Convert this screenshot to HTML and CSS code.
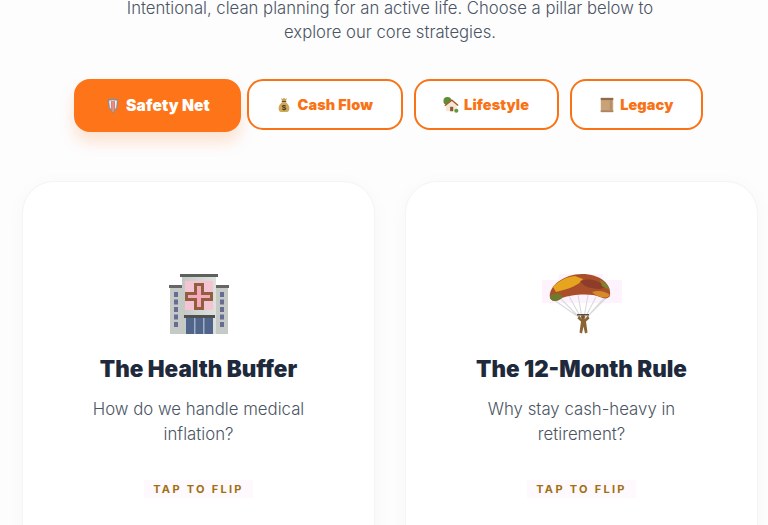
FILE: index.html
```html
<!DOCTYPE html>
<html lang="en">
<head>
<meta charset="utf-8">
<title>Retirement pillars</title>
<link rel="stylesheet" href="styles.css">
</head>
<body>
<main class="page">
  <div class="intro">
    <p class="intro-line">Intentional, clean planning for an active life. Choose a pillar below to</p>
    <p class="intro-line">explore our core strategies.</p>
  </div>
  <nav class="tabs">
    <button class="tab tab-active">
      <svg class="tab-icon" viewBox="0 0 18 18"><path d="M3 1.500 9 .5l6 1-1 9.500L9 17.500 4 11z" fill="#8a8f94"/><path d="M4.500 3 9 2.200 13.500 3l-1 7.600L9 15.500l-3.500-4.900z" fill="#eee"/><path d="M7 3h4v10l-2 2-2-2z" fill="#d9604f"/><path d="M8.500 3h1v11h-1z" fill="#f4c7bf"/></svg>
      <span>Safety Net</span>
    </button>
    <button class="tab">
      <svg class="tab-icon" viewBox="0 0 18 18"><path d="M5.500 1 7 2.200 9 1l2 1.200L12.500 1 11 5H7z" fill="#c9a15a"/><path d="M6.500 4.500h5v1.500h-5z" fill="#6e4f22"/><path d="M7 6h4c3 2 4.500 5 4 8-.3 2-2 3-3.500 3h-5C5 17 3.300 16 3 14c-.5-3 1-6 4-8z" fill="#d0a85c"/><text class="bag-sign" x="9" y="15" text-anchor="middle">$</text></svg>
      <span>Cash Flow</span>
    </button>
    <button class="tab">
      <svg class="tab-icon" viewBox="0 0 18 18"><circle cx="5" cy="4.500" r="4.500" fill="#5c8f35"/><path d="M3.500 16V8.500L10 3l7 6-1.500.5V16z" fill="#f3e7d3"/><path d="M1.500 9.500 10 2.500l7.500 6.500-1 1L10 4.500 2.500 10.500z" fill="#a5552f"/><path d="M8 11h3.500v5H8z" fill="#8b5a34"/><circle cx="15" cy="15.500" r="2.300" fill="#5f9a3a"/></svg>
      <span>Lifestyle</span>
    </button>
    <button class="tab">
      <svg class="tab-icon" viewBox="0 0 18 18"><path d="M2 1h14v16H2z" fill="#c9a27a"/><path d="M2 1h14v2.500H2z" fill="#8f6b4a"/><path d="M2 15h14v2H2z" fill="#a98560"/><path d="M12 3.500h2.500V15H12z" fill="#b58f69"/></svg>
      <span>Legacy</span>
    </button>
  </nav>
  <section class="cards">
    <article class="card">
      <svg class="card-icon" viewBox="0 0 60 60">
        <defs>
          <linearGradient id="wall" x1="0" y1="0" x2="1" y2="0">
            <stop offset="0" stop-color="#c4c8c4"/>
            <stop offset="1" stop-color="#dfe1dd"/>
          </linearGradient>
        </defs>
        <path d="M1 13h12v47H1zM47 13h12v47H47z" fill="#c6cac6"/>
        <path d="M0 11h14v3H0zM46 11h14v3H46z" fill="#666764"/>
        <path d="M13 2h34v58H13z" fill="url(#wall)"/>
        <path d="M11 0h38v3H11z" fill="#5f605e"/>
        <path d="M16 7h28v29H16z" fill="#f4c4d2"/>
        <path d="M25 9h10v9h9v9h-9v9H25v-9h-9v-9h9z" fill="#8f5f40"/>
        <path d="M28 12h4v9h9v3h-9v9h-4v-9h-9v-3h9z" fill="#f8a8bd"/>
        <path d="M15 41h31v3H15z" fill="#4f504f"/>
        <path d="M17 44h27v16H17z" fill="#51658a"/>
        <path d="M25 44h1.500v16H25zM34 44h1.500v16H34z" fill="#9db0c4"/>
        <path d="M5 18h4v5H5zM5 25.500h4v5H5zM5 33h4v5H5zM5 40.500h4v5H5zM5 48h4v5H5zM51 18h4v5h-4zM51 25.500h4v5h-4zM51 33h4v5h-4zM51 40.500h4v5h-4zM51 48h4v5h-4z" fill="#686c92"/>
      </svg>
      <h2 class="card-title">The Health Buffer</h2>
      <p class="card-text">How do we handle medical<br>inflation?</p>
      <span class="flip">TAP TO FLIP</span>
    </article>
    <article class="card">
      <svg class="card-icon" viewBox="0 0 80 60">
        <path d="M0 6h80v23H0zM17 0h44v6H17z" fill="#fef2fc"/>
        <path d="M12 26 38 44M18 24l20 20M27 22l12 22M36 21l4 23M46 21l-4 23M54 23 43 44M62 24 44 44M66 22 44 44" stroke="#d8dadf" stroke-width="1.100" fill="none"/>
        <path d="M8 24C6 12 22 0 40 0c18 0 30 10 28 22-2 3-6 3-10 1-8-4-28-3-38 1-5 4-10 4-12 0z" fill="#a9502a"/>
        <path d="M11 13C16 7 24 3 33 2l8 3c-4 6-14 10-27 13z" fill="#e6a41f"/>
        <path d="M38 7c8-3 18-2 25 6-4 3-9 2-13 1-5 0-9-3-12-7z" fill="#8e3d2a"/>
        <path d="M8 22c4-3 8-3 12-1l0 3c-5 4-10 4-12 0z" fill="#6f7a2c"/>
        <path d="M50 18c6-2 13-1 18 3-2 3-6 3-10 2-3-1-6-3-8-5z" fill="#d78a2a"/>
        <path d="M58 6c5 2 8 5 10 10-3-1-6-3-8-4z" fill="#7d8430"/>
        <path d="M35 40h12v1.500H35z" fill="#5a4d3d"/>
        <path d="M37 41.500l-1.500 3 3.500 3-1.500 11 2.500 1 1.500-7 1.500 7 2.500-1-1.500-11 3.500-3-1.500-3-2.500 3h-4z" fill="#8a6433"/>
        <circle cx="41" cy="43" r="2" fill="#7a5530"/>
      </svg>
      <h2 class="card-title">The 12-Month Rule</h2>
      <p class="card-text">Why stay cash-heavy in<br>retirement?</p>
      <span class="flip">TAP TO FLIP</span>
    </article>
  </section>
</main>
</body>
</html>
```
FILE: styles.css
```css
html, body {
  margin: 0;
  height: 525px;
  overflow: hidden;
  background: #fdfdfe;
}
.page {
  padding: 0 10px 0 22px;
  font-family: "Inter", "Liberation Sans", sans-serif;
}
.intro {
  display: flex;
  flex-direction: column;
  gap: 8px;
}
.intro-line {
  margin: 0;
  font-size: 16.7px;
  line-height: 16px;
  font-weight: 300;
  color: #4b5563;
  text-align: center;
}
.tabs {
  display: flex;
  justify-content: center;
  align-items: flex-start;
  gap: 11px;
  margin-top: 39px;
  padding-right: 3px;
}
.tab {
  display: flex;
  align-items: center;
  justify-content: center;
  gap: 5px;
  height: 51px;
  padding: 0 27.500px;
  border: 2px solid #f97316;
  border-radius: 16px;
  background: #fff;
  color: #f97316;
  font: 900 14.5px "Inter", sans-serif;
  letter-spacing: 0.1px;
}
.tab-active {
  width: 167px;
  height: 53px;
  margin-right: -5px;
  border-color: #fd7518;
  background: #fd7518;
  color: #fff;
  font-size: 15.6px;
  box-shadow: 0 10px 16px rgba(249, 115, 22, 0.2);
}
.tab-icon {
  width: 16px;
  height: 18px;
  flex: none;
}
.bag-sign {
  font: 700 9px "Liberation Sans", sans-serif;
  fill: #4b3617;
}
.cards {
  display: grid;
  grid-template-columns: 353px 353px;
  justify-content: space-between;
  margin-top: 49px;
}
.card {
  display: flex;
  flex-direction: column;
  align-items: center;
  height: 420px;
  padding-top: 92px;
  box-sizing: border-box;
  border: 1px solid #f3f4f6;
  border-radius: 32px;
  background: #fff;
  box-shadow: 0 4px 20px rgba(15, 23, 42, 0.03);
}
.card-icon {
  height: 60px;
  width: 80px;
}
.card-title {
  margin: 19px 0 0;
  font-size: 22.4px;
  line-height: 32px;
  font-weight: 900;
  color: #1e293b;
}
.card-text {
  margin: 12px 0 0;
  font-size: 16.8px;
  line-height: 25px;
  font-weight: 300;
  color: #4b5563;
  text-align: center;
}
.flip {
  margin-top: 33px;
  padding: 2px 9px;
  background: #fef9fd;
  color: #a0700f;
  font-size: 11px;
  line-height: 14px;
  font-weight: 700;
  letter-spacing: 2.3px;
}
```
